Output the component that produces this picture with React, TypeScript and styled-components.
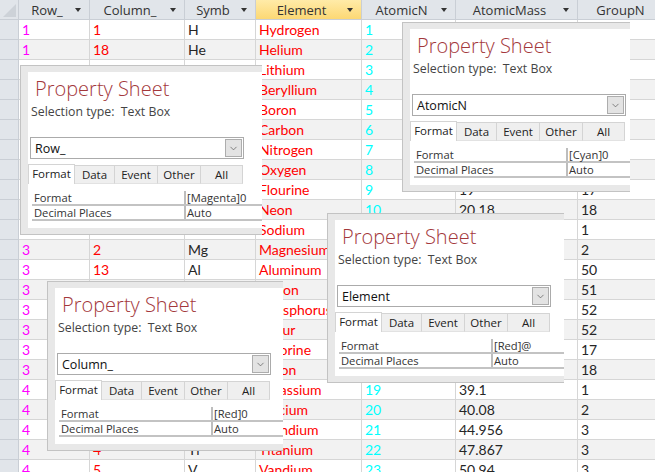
import React from 'react'
import styled, { createGlobalStyle } from 'styled-components'
import { ChevronDown } from 'lucide-react'

const GlobalStyle = createGlobalStyle`
	html, body {
		margin: 0;
		padding: 0;
		background: #fff;
	}
`

const COLUMNS = '19px 71px 95px 71px 106px 94px 122px 100px'

const MAGENTA = '#ff00ff'
const RED = '#ff0000'
const CYAN = '#00ffff'

type Element = [number, number, string, string, number, string, number]

const elements: Element[] = [
	[1, 1, 'H', 'Hydrogen', 1, '1.008', 1],
	[1, 18, 'He', 'Helium', 2, '4.0026', 18],
	[2, 1, 'Li', 'Lithium', 3, '6.94', 1],
	[2, 2, 'Be', 'Beryllium', 4, '9.0122', 2],
	[2, 13, 'B', 'Boron', 5, '10.81', 13],
	[2, 14, 'C', 'Carbon', 6, '12.011', 14],
	[2, 15, 'N', 'Nitrogen', 7, '14.007', 15],
	[2, 16, 'O', 'Oxygen', 8, '15.999', 16],
	[2, 17, 'F', 'Flourine', 9, '19', 17],
	[2, 18, 'Ne', 'Neon', 10, '20.18', 18],
	[3, 1, 'Na', 'Sodium', 11, '22.99', 1],
	[3, 2, 'Mg', 'Magnesium', 12, '24.305', 2],
	[3, 13, 'Al', 'Aluminum', 13, '26.982', 50],
	[3, 14, 'Si', 'Silicon', 14, '28.085', 51],
	[3, 15, 'P', 'Phosphorus', 15, '30.974', 52],
	[3, 16, 'S', 'Sulfur', 16, '32.06', 52],
	[3, 17, 'Cl', 'Chlorine', 17, '35.45', 17],
	[3, 18, 'Ar', 'Argon', 18, '39.948', 18],
	[4, 1, 'K', 'Potassium', 19, '39.1', 1],
	[4, 2, 'Ca', 'Calcium', 20, '40.08', 2],
	[4, 3, 'Sc', 'Scandium', 21, '44.956', 3],
	[4, 4, 'Ti', 'Titanium', 22, '47.867', 3],
	[4, 5, 'V', 'Vandium', 23, '50.94', 3],
]

const headers = ['Row_', 'Column_', 'Symb', 'Element', 'AtomicN', 'AtomicMass', 'GroupN']

const sheets = [
	{ x: 20, y: 65, w: 242, field: 'Row_', format: '[Magenta]0' },
	{ x: 402, y: 22, w: 228, field: 'AtomicN', format: '[Cyan]0' },
	{ x: 327, y: 213, w: 237, field: 'Element', format: '[Red]@' },
	{ x: 47, y: 281, w: 236, field: 'Column_', format: '[Red]0' },
]

const tabs = [
	{ label: 'Format', w: 47 },
	{ label: 'Data', w: 40 },
	{ label: 'Event', w: 43 },
	{ label: 'Other', w: 43 },
	{ label: 'All', w: 42 },
]

const Screen = styled.div`
	position: relative;
	width: 655px;
	height: 472px;
	overflow: hidden;
	background: #fff;
`

const Datasheet = styled.div`
	display: flex;
	flex-direction: column;
	width: 678px;
`

const HeaderRow = styled.div`
	display: grid;
	grid-template-columns: ${COLUMNS};
	height: 20px;
	background: #e1e5ea;
	font-family: 'Open Sans', sans-serif;
	font-size: 13px;
	color: #333;
`

const Corner = styled.div`
	box-sizing: border-box;
	display: flex;
	align-items: flex-end;
	justify-content: flex-end;
	padding: 2px;
	border-right: 1px solid #c9ced5;
	border-bottom: 1px solid #c9ced5;
`

const HeaderCell = styled.div<{ $active?: boolean }>`
	box-sizing: border-box;
	display: flex;
	align-items: center;
	padding-right: 8px;
	border-right: 1px solid #c9ced5;
	border-bottom: 1px solid #c9ced5;
	background: ${(p) => (p.$active ? 'linear-gradient(#ffeba8, #fcd874)' : 'transparent')};
`

const HeaderLabel = styled.span`
	flex: 1;
	text-align: center;
	white-space: nowrap;
`

const SortArrow = styled.span`
	width: 0;
	height: 0;
	border-left: 3.5px solid transparent;
	border-right: 3.5px solid transparent;
	border-top: 4px solid #333;
`

const DataRow = styled.div<{ $alt: boolean }>`
	display: grid;
	grid-template-columns: ${COLUMNS};
	height: 20px;
	background: ${(p) => (p.$alt ? '#f2f2f2' : '#fff')};
	font-family: Lato, sans-serif;
	font-size: 14px;
`

const Selector = styled.div`
	box-sizing: border-box;
	background: #e1e5ea;
	border-right: 1px solid #c9ced5;
	border-bottom: 1px solid #c9ced5;
`

const Cell = styled.div<{ $color?: string }>`
	box-sizing: border-box;
	padding: 0 3px;
	line-height: 19px;
	color: ${(p) => p.$color ?? '#262626'};
	white-space: nowrap;
	overflow: hidden;
	border-right: 1px solid #d6d6d6;
	border-bottom: 1px solid #d6d6d6;
`

const Frame = styled.div<{ $x: number; $y: number; $w: number }>`
	position: absolute;
	left: ${(p) => p.$x}px;
	top: ${(p) => p.$y}px;
	width: ${(p) => p.$w}px;
	height: 170px;
	box-sizing: border-box;
	padding: 6px 0 6px 7px;
	overflow: hidden;
	background: #e8e8e8;
	border: 1px solid #c3c3c3;
	border-right: none;
	font-family: 'Open Sans', sans-serif;
	color: #333;
`

const Panel = styled.div`
	width: 250px;
	height: 156px;
	overflow: hidden;
	background: #fff;
`

const Title = styled.div`
	margin: 5px 0 0 7px;
	font-size: 20px;
	font-weight: 300;
	line-height: 24px;
	color: #a3383b;
	white-space: nowrap;
`

const SelectionType = styled.div`
	margin: 3px 0 0 3px;
	font-size: 12.3px;
	line-height: 15px;
	color: #444;
	white-space: pre;
`

const Combo = styled.div`
	box-sizing: border-box;
	display: flex;
	align-items: center;
	justify-content: space-between;
	width: 214px;
	height: 22px;
	margin: 18px 0 0 2px;
	padding: 0 1px 0 4px;
	border: 1px solid #ababab;
	font-size: 12.5px;
	color: #111;
`

const ComboButton = styled.div`
	box-sizing: border-box;
	display: flex;
	align-items: center;
	justify-content: center;
	width: 17px;
	height: 18px;
	background: #e3e3e3;
	border: 1px solid #adadad;
	color: #555;
`

const Tabs = styled.div`
	display: flex;
	align-items: flex-end;
	height: 20px;
	margin-top: 5px;
`

const Tab = styled.div<{ $active?: boolean; $w: number }>`
	box-sizing: border-box;
	width: ${(p) => p.$w}px;
	height: ${(p) => (p.$active ? 20 : 19)}px;
	text-align: center;
	font-size: 11.5px;
	line-height: 18px;
	color: #222;
	background: ${(p) => (p.$active ? '#fff' : '#efefef')};
	border: 1px solid #d4d4d4;
	border-left: ${(p) => (p.$active ? '1px solid #d4d4d4' : 'none')};
	border-bottom: ${(p) => (p.$active ? 'none' : '1px solid #e2e2e2')};
`

const PropGrid = styled.div`
	margin: 7px 0 0 4px;
`

const PropRow = styled.div`
	display: grid;
	grid-template-columns: 154px 1fr;
	height: 15px;
	box-sizing: border-box;
	border-bottom: 2px solid #c3c3c3;
	font-size: 11.2px;
	line-height: 13px;
	white-space: nowrap;
`

const PropLabel = styled.div`
	padding-left: 2px;
	border-right: 2px solid #bdbdbd;
`

const PropValue = styled.div`
	padding-left: 1px;
`

const PropertySheet: React.FC<{ x: number; y: number; w: number; field: string; format: string }> = ({
	x,
	y,
	w,
	field,
	format,
}) => (
	<Frame $x={x} $y={y} $w={w}>
		<Panel>
			<Title>Property Sheet</Title>
			<SelectionType>{'Selection type:  Text Box'}</SelectionType>
			<Combo>
				<span>{field}</span>
				<ComboButton>
					<ChevronDown size={11} strokeWidth={1.5} />
				</ComboButton>
			</Combo>
			<Tabs>
				{tabs.map((t, i) => (
					<Tab key={t.label} $w={t.w} $active={i === 0}>
						{t.label}
					</Tab>
				))}
			</Tabs>
			<PropGrid>
				<PropRow>
					<PropLabel>Format</PropLabel>
					<PropValue>{format}</PropValue>
				</PropRow>
				<PropRow>
					<PropLabel>Decimal Places</PropLabel>
					<PropValue>Auto</PropValue>
				</PropRow>
			</PropGrid>
		</Panel>
	</Frame>
)

export default function App() {
	return (
		<Screen>
			<GlobalStyle />
			<Datasheet>
				<HeaderRow>
					<Corner>
						<svg width='13' height='13' viewBox='0 0 13 13'>
							<polygon points='13,0 13,13 0,13' fill='#cdd2d8' />
						</svg>
					</Corner>
					{headers.map((h) => (
						<HeaderCell key={h} $active={h === 'Element'}>
							<HeaderLabel>{h}</HeaderLabel>
							<SortArrow />
						</HeaderCell>
					))}
				</HeaderRow>
				{elements.map((el, i) => (
					<DataRow key={el[3]} $alt={i % 2 === 1}>
						<Selector />
						<Cell $color={MAGENTA}>{el[0]}</Cell>
						<Cell $color={RED}>{el[1]}</Cell>
						<Cell>{el[2]}</Cell>
						<Cell $color={RED}>{el[3]}</Cell>
						<Cell $color={CYAN}>{el[4]}</Cell>
						<Cell>{el[5]}</Cell>
						<Cell>{el[6]}</Cell>
					</DataRow>
				))}
			</Datasheet>
			{sheets.map((s) => (
				<PropertySheet key={s.field} {...s} />
			))}
		</Screen>
	)
}
